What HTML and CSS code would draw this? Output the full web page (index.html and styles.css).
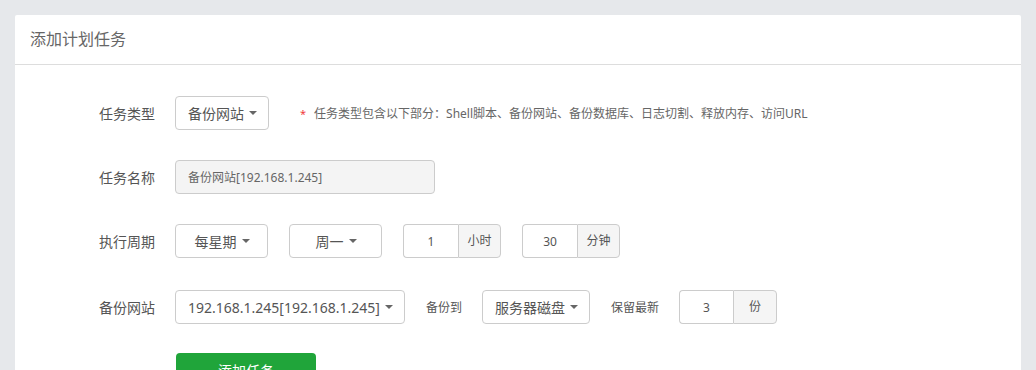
FILE: index.html
```html
<!DOCTYPE html>
<html lang="zh-CN">
<head>
    <meta charset="UTF-8">
    <meta name="viewport" content="width=device-width, initial-scale=1.0">
    <title>添加计划任务</title>
    <link rel="stylesheet" href="styles.css">
</head>
<body>
    <div class="panel">
        <header class="panel-header">添加计划任务</header>

        <main class="panel-body">
            <div class="form-row">
                <label class="form-label">任务类型</label>
                <button class="dropdown">备份网站<span class="caret"></span></button>
                <span class="tips"><em>*</em>任务类型包含以下部分：Shell脚本、备份网站、备份数据库、日志切割、释放内存、访问URL</span>
            </div>

            <div class="form-row">
                <label class="form-label">任务名称</label>
                <input class="text-input readonly" type="text" value="备份网站[192.168.1.245]" readonly>
            </div>

            <div class="form-row">
                <label class="form-label">执行周期</label>
                <button class="dropdown fixed">每星期<span class="caret"></span></button>
                <button class="dropdown fixed">周一<span class="caret"></span></button>
                <div class="input-group">
                    <input class="group-input" type="text" value="1">
                    <span class="addon">小时</span>
                </div>
                <div class="input-group">
                    <input class="group-input" type="text" value="30">
                    <span class="addon">分钟</span>
                </div>
            </div>

            <div class="form-row last">
                <label class="form-label">备份网站</label>
                <button class="dropdown">192.168.1.245[192.168.1.245]<span class="caret"></span></button>
                <span class="inline-label">备份到</span>
                <button class="dropdown">服务器磁盘<span class="caret"></span></button>
                <span class="inline-label">保留最新</span>
                <div class="input-group">
                    <input class="group-input narrow" type="text" value="3">
                    <span class="addon wide">份</span>
                </div>
            </div>

            <div class="form-row">
                <span class="form-label"></span>
                <button class="btn-submit">添加任务</button>
            </div>
        </main>
    </div>
</body>
</html>
```

FILE: styles.css
```css
* {
    margin: 0;
    padding: 0;
    box-sizing: border-box;
}

body {
    font-family: "Noto Sans", "Noto Sans CJK SC", sans-serif;
    font-size: 14px;
    color: #555;
    background: #e6e8eb;
    padding: 15px;
    overflow: hidden;
}

.panel {
    background: #fff;
    border-radius: 2px;
    min-height: 400px;
}

.panel-header {
    height: 50px;
    line-height: 49px;
    padding: 0 15px;
    font-size: 16px;
    color: #666;
    border-bottom: 1px solid #ddd;
}

.panel-body {
    padding-top: 31px;
}

.form-row {
    display: flex;
    align-items: center;
    height: 34px;
    margin-bottom: 30px;
}

.form-row.last {
    margin-bottom: 29px;
}

.form-row:nth-child(3) {
    margin-bottom: 32px;
}

.form-label {
    width: 140px;
    margin-right: 20px;
    text-align: right;
    color: #555;
    font-size: 14px;
}

.dropdown {
    height: 34px;
    padding: 0 11px 0 12px;
    border: 1px solid #ccc;
    border-radius: 4px;
    background: #fff;
    color: #555;
    font-family: inherit;
    font-size: 14px;
    margin-right: 21px;
    display: flex;
    align-items: center;
    justify-content: center;
}

.dropdown.fixed {
    width: 93px;
}

.caret {
    display: inline-block;
    width: 0;
    height: 0;
    margin-left: 5px;
    border-top: 4px solid #666;
    border-left: 4px solid transparent;
    border-right: 4px solid transparent;
}

.tips {
    font-size: 12px;
    color: #666;
    margin-left: 10px;
}

.tips em {
    font-style: normal;
    font-size: 11px;
    color: #f03c3c;
    margin-right: 8px;
}

.text-input {
    width: 260px;
    height: 34px;
    padding: 0 12px;
    border: 1px solid #ccc;
    border-radius: 4px;
    font-family: inherit;
    font-size: 12px;
    color: #666;
}

.text-input.readonly {
    background: #f4f4f4;
}

.input-group {
    display: flex;
    height: 34px;
    margin-right: 21px;
}

.group-input {
    width: 55px;
    height: 34px;
    border: 1px solid #ccc;
    border-right: none;
    border-radius: 4px 0 0 4px;
    text-align: center;
    font-family: inherit;
    font-size: 12px;
    color: #555;
}

.group-input.narrow {
    width: 54px;
}

.addon {
    width: 43px;
    line-height: 32px;
    text-align: center;
    border: 1px solid #ccc;
    border-radius: 0 4px 4px 0;
    background: #f5f5f5;
    font-size: 12px;
    color: #555;
}

.addon.wide {
    width: 44px;
}

.inline-label {
    font-size: 12px;
    color: #555;
    margin-right: 20px;
}

.btn-submit {
    width: 140px;
    height: 34px;
    margin-left: 1px;
    border: none;
    border-radius: 4px;
    background: #20a53a;
    color: #fff;
    font-family: inherit;
    font-size: 14px;
    cursor: pointer;
}
```
